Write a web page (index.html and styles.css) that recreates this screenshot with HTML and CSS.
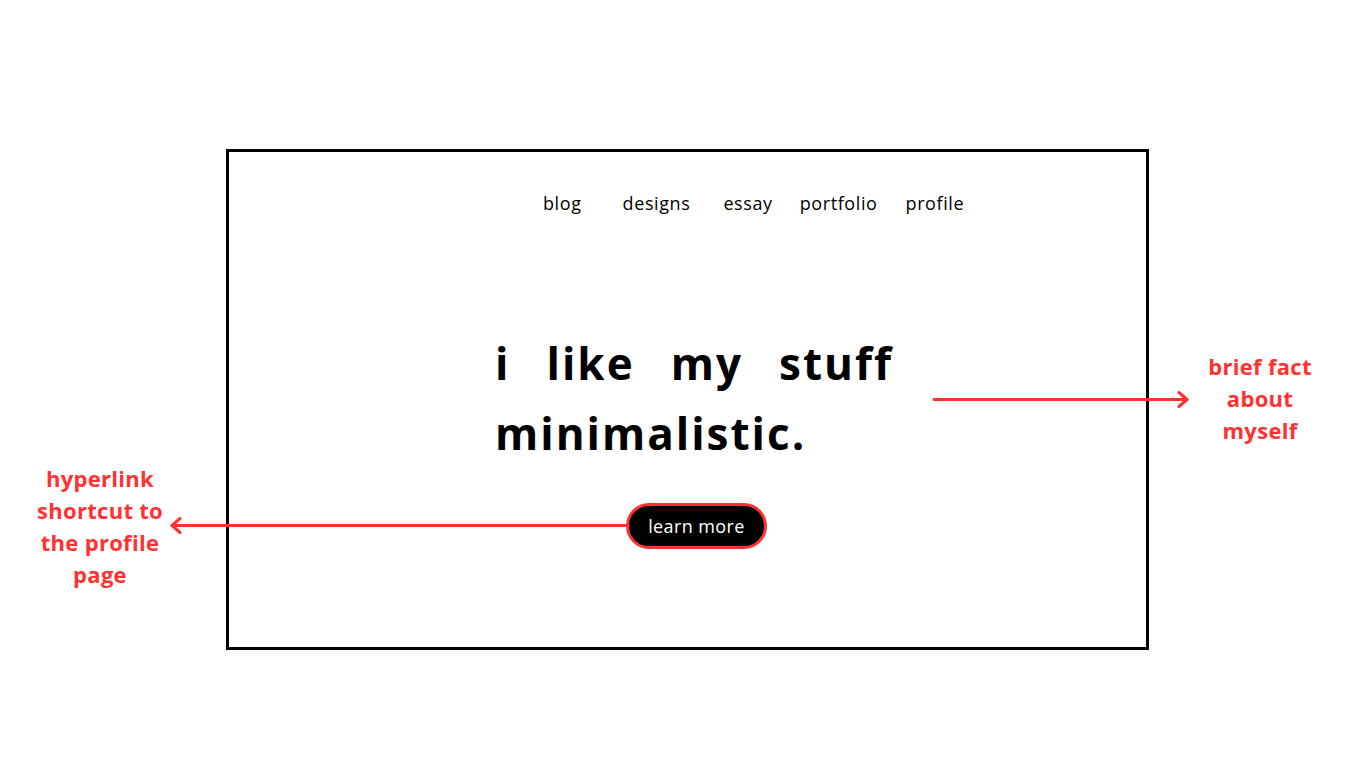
FILE: index.html
```html
<!DOCTYPE html>
<html>
<head>
<meta charset="utf-8">
<link rel="stylesheet" href="styles.css">
</head>
<body>
<div class="page">
  <div class="frame">
    <nav class="nav">
      <a class="nav-item n-blog">blog</a>
      <a class="nav-item n-designs">designs</a>
      <a class="nav-item n-essay">essay</a>
      <a class="nav-item n-portfolio">portfolio</a>
      <a class="nav-item n-profile">profile</a>
    </nav>
    <h1 class="headline">i like my stuff minimalistic.</h1>
    <div class="cta-row"><a class="cta">learn more</a></div>
  </div>
  <svg class="arrows" width="1366" height="768" viewBox="0 0 1366 768">
    <g fill="none" stroke="#ff3131" stroke-width="3" stroke-linecap="round" stroke-linejoin="round">
      <line x1="934" y1="399.5" x2="1187" y2="399.5"/>
      <polyline points="1179,392.5 1187,399.5 1179,406.5"/>
      <line x1="628" y1="525.5" x2="172" y2="525.5"/>
      <polyline points="180,518.5 172,525.5 180,532.5"/>
    </g>
  </svg>
  <div class="note note-right">brief fact<br>about<br>myself</div>
  <div class="note note-left">hyperlink<br>shortcut to<br>the profile<br>page</div>
</div>
</body>
</html>
```

FILE: styles.css
```css
html, body {
  margin: 0;
  padding: 0;
  background: #ffffff;
}
.page {
  position: relative;
  width: 1366px;
  height: 768px;
  padding: 149px 0 0 226px;
  box-sizing: border-box;
  font-family: "Open Sans", "Noto Sans", sans-serif;
}
.frame {
  width: 923px;
  height: 501px;
  box-sizing: border-box;
  border: 3px solid #000;
  display: flex;
  flex-direction: column;
  align-items: flex-start;
}
.nav {
  display: flex;
  margin: 39px 0 0 314px;
  font-size: 18px;
  letter-spacing: 0.6px;
  color: #000;
  line-height: 24px;
}
.nav-item { color: #000; text-decoration: none; }
.n-designs { margin-left: 41px; }
.n-essay { margin-left: 33px; }
.n-portfolio { margin-left: 27px; }
.n-profile { margin-left: 28px; }
.headline {
  margin: 113px 0 0 266px;
  width: 398px;
  font-size: 44px;
  font-weight: 700;
  letter-spacing: 2px;
  line-height: 70px;
  text-align: justify;
  text-align-last: left;
  color: #000;
}
.cta-row {
  margin: 35px 0 0 397px;
}
.cta {
  display: flex;
  align-items: center;
  justify-content: center;
  width: 141px;
  height: 46px;
  box-sizing: border-box;
  border: 3px solid #ff3131;
  border-radius: 23px;
  background: #000;
  color: #fff;
  font-size: 18px;
  letter-spacing: 0.4px;
}
.arrows {
  position: absolute;
  left: 0;
  top: 0;
}
.note {
  position: absolute;
  color: #ff3131;
  font-weight: 700;
  font-size: 22px;
  letter-spacing: 0.3px;
  line-height: 32px;
  text-align: center;
  width: 200px;
}
.note-right { left: 1160px; top: 350px; }
.note-left { left: 0px; top: 462px; }
```
